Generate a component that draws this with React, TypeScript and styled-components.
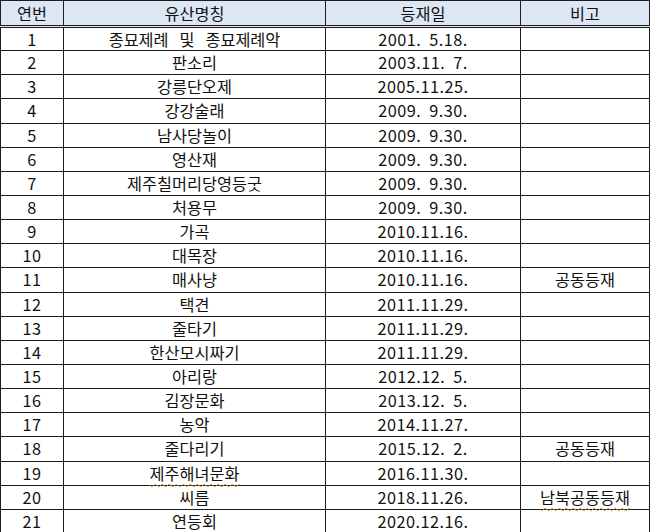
import React from "react";
import styled, { createGlobalStyle } from "styled-components";

const Global = createGlobalStyle`
  html, body { margin: 0; padding: 0; background: #ffffff; }
  body { font-family: "Noto Sans CJK KR", "Noto Sans", sans-serif; }
`;

const Table = styled.table`
  border-collapse: collapse;
  table-layout: fixed;
  width: 649px;
  color: #111111;
  font-size: 16.3px;
`;

const Col = styled.col<{ $w: number }>`
  width: ${(p) => p.$w}px;
`;

const HeadCell = styled.th`
  background: #dce6f4;
  font-weight: 400;
  height: 24px;
  padding: 0;
  line-height: 22px;
  text-align: center;
  border: 1px solid #1c1c1c;
  border-bottom: 3px double #1c1c1c;
`;

const Row = styled.tr`
  height: 24.15px;
`;

const Cell = styled.td<{ $spaced?: boolean }>`
  padding: 0;
  line-height: 21px;
  text-align: center;
  border: 1px solid #1c1c1c;
  white-space: pre;
  letter-spacing: ${(p) => (p.$spaced ? "0.45px" : "0")};
`;

const Spell = styled.span<{ $on: boolean }>`
  text-decoration: ${(p) => (p.$on ? "underline wavy #d2ad5a" : "none")};
  text-decoration-thickness: 1px;
  text-underline-offset: 3px;
`;

type Item = { name: string; date: string; note?: string; nameFlag?: boolean; noteFlag?: boolean };

const items: Item[] = [
  { name: "종묘제례   및   종묘제례악", date: "2001.  5.18." },
  { name: "판소리", date: "2003.11.  7." },
  { name: "강릉단오제", date: "2005.11.25." },
  { name: "강강술래", date: "2009.  9.30." },
  { name: "남사당놀이", date: "2009.  9.30." },
  { name: "영산재", date: "2009.  9.30." },
  { name: "제주칠머리당영등굿", date: "2009.  9.30." },
  { name: "처용무", date: "2009.  9.30." },
  { name: "가곡", date: "2010.11.16." },
  { name: "대목장", date: "2010.11.16." },
  { name: "매사냥", date: "2010.11.16.", note: "공동등재" },
  { name: "택견", date: "2011.11.29." },
  { name: "줄타기", date: "2011.11.29." },
  { name: "한산모시짜기", date: "2011.11.29." },
  { name: "아리랑", date: "2012.12.  5." },
  { name: "김장문화", date: "2013.12.  5." },
  { name: "농악", date: "2014.11.27." },
  { name: "줄다리기", date: "2015.12.  2.", note: "공동등재" },
  { name: "제주해녀문화", date: "2016.11.30.", nameFlag: true },
  { name: "씨름", date: "2018.11.26.", note: "남북공동등재", noteFlag: true },
  { name: "연등회", date: "2020.12.16." },
];

export default function App() {
  return (
    <>
      <Global />
      <Table>
        <colgroup>
          <Col $w={63} />
          <Col $w={262} />
          <Col $w={195} />
          <Col $w={129} />
        </colgroup>
        <thead>
          <tr>
            <HeadCell>연번</HeadCell>
            <HeadCell>유산명칭</HeadCell>
            <HeadCell>등재일</HeadCell>
            <HeadCell>비고</HeadCell>
          </tr>
        </thead>
        <tbody>
          {items.map((it, i) => (
            <Row key={i}>
              <Cell $spaced>{i + 1}</Cell>
              <Cell>
                <Spell $on={!!it.nameFlag}>{it.name}</Spell>
              </Cell>
              <Cell $spaced>{it.date}</Cell>
              <Cell>
                <Spell $on={!!it.noteFlag}>{it.note ?? ""}</Spell>
              </Cell>
            </Row>
          ))}
        </tbody>
      </Table>
    </>
  );
}
